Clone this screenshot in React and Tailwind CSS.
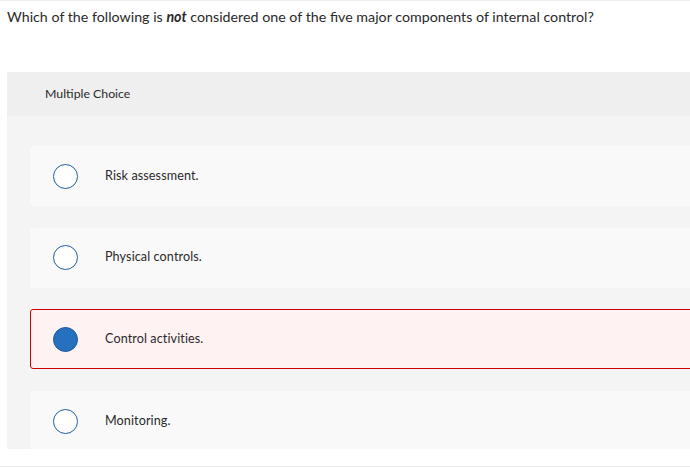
import React from 'react';

const options = [
    { id: 'a', label: 'Risk assessment.' },
    { id: 'b', label: 'Physical controls.' },
    { id: 'c', label: 'Control activities.', selected: true },
    { id: 'd', label: 'Monitoring.' },
];

const Radio = ({ checked }) => (
    <span
        className={
            checked
                ? 'w-[25px] h-[25px] rounded-full bg-[#2670c0] border border-[#1b5a9c] flex-shrink-0'
                : 'w-[25px] h-[25px] rounded-full bg-white border-[1.5px] border-[#1f5f9e] flex-shrink-0'
        }
    />
);

const App = () => {
    return (
        <div className="w-[690px] h-[468px] bg-white overflow-hidden font-['Lato',sans-serif] text-[#2a2a2a] border-t border-[#ececec] relative">
            <p className="pl-[7px] pt-[7px] text-[14.25px] leading-[17px]">
                Which of the following is <b className="italic font-bold">not</b> considered one of the five major components of internal control?
            </p>

            <div className="ml-[7px] mt-[47px] bg-[#f4f4f4] h-[377px] overflow-hidden">
                <div className="h-[44px] bg-[#efefef] flex items-center pl-[38px] text-[12.3px]">
                    Multiple Choice
                </div>

                <div className="pt-[30px] pl-[23px] flex flex-col gap-[21.7px]">
                    {options.map((opt) => (
                        <div
                            key={opt.id}
                            className={
                                opt.selected
                                    ? 'h-[60px] -mr-[4px] rounded-[3px] bg-[#fff2f2] border border-[#cc0000] flex items-center pl-[22px]'
                                    : 'h-[60px] -mr-[4px] rounded-[3px] bg-[#f9f9f9] flex items-center pl-[23px]'
                            }
                        >
                            <Radio checked={opt.selected} />
                            <span className="ml-[27px] text-[12.6px] tracking-[0.1px]">{opt.label}</span>
                        </div>
                    ))}
                </div>
            </div>

            <div className="absolute left-0 right-0 bottom-[1px] h-[1px] bg-[#ececec]" />
        </div>
    );
};

export default App;
